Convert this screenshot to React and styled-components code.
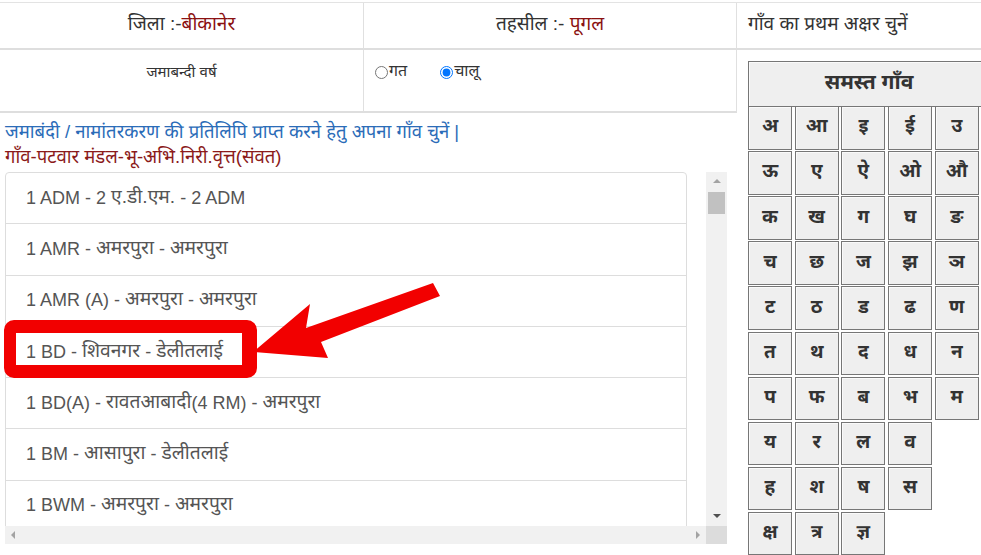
import styled, { createGlobalStyle } from "styled-components";

const Global = createGlobalStyle`
  html, body { margin: 0; padding: 0; background: #fff; }
  body {
    font-family: "Liberation Sans", "Noto Sans Devanagari", "Lohit Devanagari", "Noto Sans", sans-serif;
    color: #333;
    overflow: hidden;
  }
`

const Page = styled.div`
  position: relative;
  width: 981px;
  height: 555px;
  overflow: hidden;
`

const Table = styled.div`
  margin-top: 2px;
  border-top: 1px solid #e3e3e3;
  display: grid;
  grid-template-columns: 364px 373px 1fr;
  grid-template-rows: 47px 63px 1fr;
  height: 552px;
`

const HeadCell = styled.div`
  display: flex;
  align-items: center;
  justify-content: ${p => p.$left ? "flex-start" : "center"};
  padding-left: ${p => p.$left ? "11px" : "0"};
  font-size: 19px;
  border-bottom: 2px solid #dedede;
  border-right: ${p => p.$last ? "none" : "1px solid #e0e0e0"};
  & b { font-weight: 400; color: #8b1111; }
`

const YearCell = styled.div`
  display: flex;
  justify-content: center;
  align-items: flex-start;
  padding-top: 13px;
  font-size: 15px;
  border-bottom: 2px solid #dedede;
  border-right: 1px solid #e0e0e0;
`

const RadioCell = styled.div`
  display: flex;
  align-items: flex-start;
  gap: 33px;
  padding: 12px 0 0 11px;
  font-size: 16px;
  border-bottom: 2px solid #dedede;
  border-right: 1px solid #e0e0e0;
  & label { display: flex; align-items: center; }
  & input { margin: 0 1px 0 0; width: 13px; height: 13px; }
`

const LetterCell = styled.div`
  grid-row: 2 / span 2;
  grid-column: 3;
  padding: 11px 0 0 11px;
`

const LetterGrid = styled.div`
  display: grid;
  grid-template-columns: repeat(5, 44px);
  grid-auto-rows: 43.5px;
  column-gap: 2.7px;
  row-gap: 1.6px;
  & > :first-child { grid-column: 1 / span 5; height: 44px; width: 240px; margin-bottom: 0.5px; }
`

const Letter = styled.div`
  background: #efefef;
  border: 1px solid #767676;
  box-shadow: inset 1px 1px 0 #fafafa;
  display: flex;
  align-items: center;
  justify-content: center;
  font-weight: 700;
  font-size: ${p => p.$big ? "21px" : "19px"};
  color: #333;
`

const Content = styled.div`
  grid-column: 1 / span 2;
  padding: 6px 0 0 5px;
`

const Note = styled.div`
  font-size: 18.5px;
  line-height: 25px;
  color: ${p => p.$maroon ? "#8b1a1a" : "#2b6cb8"};
`

const ScrollBox = styled.div`
  margin-top: 3px;
  width: 722px;
  height: 372px;
  display: grid;
  grid-template-columns: 1fr 21px;
  grid-template-rows: 1fr 18px;
`

const Viewport = styled.div`
  overflow: hidden;
  min-height: 0;
`

const ListGroup = styled.div`
  width: 680px;
  border: 1px solid #dddddd;
  border-radius: 4px 4px 0 0;
`

const Item = styled.div`
  height: 50.3px;
  display: flex;
  align-items: center;
  white-space: pre;
  padding-left: 20px;
  font-size: 18px;
  color: #555;
  border-top: ${p => p.$first ? "none" : "1px solid #dddddd"};
`

// Devanagari runs are drawn a little larger, like the Mangal font of the original
const Dev = styled.span`
  font-size: 1.07em;
`

const VBar = styled.div`
  background: #f1f1f1;
  display: flex;
  flex-direction: column;
  align-items: center;
  padding: 7px 0 8px;
  justify-content: space-between;
  position: relative;
`

const HBar = styled.div`
  background: #f1f1f1;
  display: flex;
  align-items: center;
  justify-content: space-between;
  padding: 0 6px;
`

const Corner = styled.div`
  background: #dcdcdc;
`

const Thumb = styled.div`
  position: absolute;
  top: 20px;
  left: 2px;
  width: 17px;
  height: 22px;
  background: #c1c1c1;
`

const Tri = styled.div`
  width: 0;
  height: 0;
  border: 4px solid transparent;
  ${p => p.$dir === "up" && `border-bottom: 4px solid #a3a3a3; border-top-width: 0;`}
  ${p => p.$dir === "down" && `border-top: 4px solid #505050; border-bottom-width: 0;`}
  ${p => p.$dir === "left" && `border-right: 4px solid #a3a3a3; border-left-width: 0;`}
  ${p => p.$dir === "right" && `border-left: 4px solid #a3a3a3; border-right-width: 0;`}
`

const Highlight = styled.div`
  position: absolute;
  left: 4px;
  top: 320px;
  width: 253px;
  height: 58px;
  box-sizing: border-box;
  border: 13px solid #f20000;
  border-left-width: 12px;
  border-right-width: 15px;
  border-radius: 10px;
`

const Arrow = styled.svg`
  position: absolute;
  left: 250px;
  top: 280px;
`

const letters = [
  "अ", "आ", "इ", "ई", "उ",
  "ऊ", "ए", "ऐ", "ओ", "औ",
  "क", "ख", "ग", "घ", "ङ",
  "च", "छ", "ज", "झ", "ञ",
  "ट", "ठ", "ड", "ढ", "ण",
  "त", "थ", "द", "ध", "न",
  "प", "फ", "ब", "भ", "म",
  "य", "र", "ल", "व", null,
  "ह", "श", "ष", "स", null,
  "क्ष", "त्र", "ज्ञ",
]

const villages = [
  "1 ADM - 2 ए.डी.एम. - 2 ADM",
  "1 AMR - अमरपुरा - अमरपुरा",
  "1 AMR (A) - अमरपुरा - अमरपुरा",
  "1 BD - शिवनगर - डेलीतलाई",
  "1 BD(A) - रावतआबादी(4 RM) - अमरपुरा",
  "1 BM - आसापुरा - डेलीतलाई",
  "1 BWM - अमरपुरा - अमरपुरा",
]

const splitScript = text =>
  text.split(/([\u0900-\u097F.]*[\u0900-\u097F][\u0900-\u097F.]*)/).map((part, i) =>
    /[\u0900-\u097F]/.test(part) ? <Dev key={i}>{part}</Dev> : part
  )

export default function App() {
  return (
    <Page>
      <Global />
      <Table>
        <HeadCell>जिला :-<b>बीकानेर</b></HeadCell>
        <HeadCell>तहसील :-&nbsp;<b>पूगल</b></HeadCell>
        <HeadCell $left $last>गाँव का प्रथम अक्षर चुनें</HeadCell>

        <YearCell>जमाबन्दी वर्ष</YearCell>
        <RadioCell>
          <label><input type="radio" name="yr" />गत</label>
          <label><input type="radio" name="yr" defaultChecked />चालू</label>
        </RadioCell>
        <LetterCell>
          <LetterGrid>
            <Letter $big>समस्त गाँव</Letter>
            {letters.map((l, i) => l ? <Letter key={i}>{l}</Letter> : <div key={i} />)}
          </LetterGrid>
        </LetterCell>

        <Content>
          <Note>जमाबंदी / नामांतरकरण की प्रतिलिपि प्राप्त करने हेतु अपना गाँव चुनें |</Note>
          <Note $maroon>गाँव-पटवार मंडल-भू-अभि.निरी.वृत्त(संवत)</Note>
          <ScrollBox>
            <Viewport>
              <ListGroup>
                {villages.map((v, i) => <Item key={i} $first={i === 0}>{splitScript(v)}</Item>)}
              </ListGroup>
            </Viewport>
            <VBar>
              <Tri $dir="up" />
              <Thumb />
              <Tri $dir="down" />
            </VBar>
            <HBar>
              <Tri $dir="left" />
              <Tri $dir="right" />
            </HBar>
            <Corner />
          </ScrollBox>
        </Content>
      </Table>

      <Highlight />
      <Arrow width="195" height="82" viewBox="0 0 195 82">
        <polygon points="3,72 60,24 56,48 183,3 190,16 71,62 78,78" fill="#f20000" />
      </Arrow>
    </Page>
  )
}
